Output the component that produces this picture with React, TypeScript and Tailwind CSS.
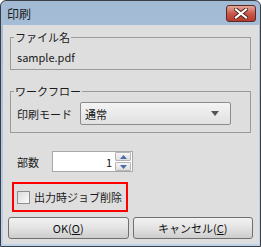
import React from "react";

const font = { fontFamily: '"Noto Sans CJK JP", "Noto Sans", sans-serif' };

function CloseButton() {
  return (
    <div className="flex h-[17px] w-[30px] items-center justify-center rounded-[3px] border border-[#5b2a24] bg-gradient-to-b from-[#e3a89c] via-[#c95a4b] to-[#b23a2c]">
      <svg width="14" height="11" viewBox="0 0 14 11">
        <path d="M2 1.5 L12 9.5 M12 1.5 L2 9.5" stroke="#4a1f1a" strokeWidth="4" strokeLinecap="square" />
        <path d="M2 1.5 L12 9.5 M12 1.5 L2 9.5" stroke="#ffffff" strokeWidth="2.2" strokeLinecap="square" />
      </svg>
    </div>
  );
}

function GroupBox({ title, children, className }: { title: string; children: React.ReactNode; className?: string }) {
  return (
    <fieldset className={"ml-[7px] mr-[8px] border border-[#9b9b9b] " + (className ?? "")}>
      <legend className="ml-[3px] px-[1px] text-[11px] leading-[14px] text-[#1a1a1a]">{title}</legend>
      {children}
    </fieldset>
  );
}

function Button({ label, accel }: { label: string; accel: string }) {
  return (
    <button className="flex h-[22px] flex-1 items-center justify-center rounded-[3px] border border-[#707070] bg-gradient-to-b from-[#f2f2f2] via-[#e3e3e3] to-[#cdcdcd] text-[11px] leading-[14px] text-[#111]">
      {label}(<span className="underline">{accel}</span>)
    </button>
  );
}

export default function App() {
  return (
    <div style={font} className="flex h-[247px] w-[261px] flex-col rounded-t-[6px] border border-[#3a3f46] bg-gradient-to-b from-[#a3bad5] to-[#bcd2ea]">
      <div className="flex h-[24px] shrink-0 items-center justify-between pl-[6px] pr-[4px] pt-[1px]">
        <span className="text-[12px] leading-[16px] text-[#1b1b1b]">印刷</span>
        <CloseButton />
      </div>

      <div className="mb-[2px] ml-[2px] mr-[1px] flex flex-1 flex-col bg-[#dedede] pt-[5px]">
        <GroupBox title="ファイル名">
          <div className="pb-[5px] pl-[6px] pt-[6px] text-[11px] leading-[14px] text-[#1a1a1a]">sample.pdf</div>
        </GroupBox>

        <GroupBox title="ワークフロー" className="mt-[14px]">
          <div className="flex items-center pb-[7px] pl-[6px] pt-[4px]">
            <span className="w-[63px] whitespace-nowrap text-[11px] leading-[14px] text-[#1a1a1a]">印刷モード</span>
            <div className="flex h-[23px] w-[151px] items-center justify-between rounded-[2px] border border-[#8c8c8c] bg-gradient-to-b from-[#f4f4f4] to-[#e1e1e1] pl-[4px] pr-[11px]">
              <span className="text-[11px] leading-[14px] text-[#111]">通常</span>
              <svg width="8" height="5" viewBox="0 0 8 5">
                <path d="M0 0 H8 L4 5 Z" fill="#555" />
              </svg>
            </div>
          </div>
        </GroupBox>

        <div className="mt-[18px] flex items-center pl-[14px]">
          <span className="w-[35px] text-[11px] leading-[14px] text-[#1a1a1a]">部数</span>
          <div className="flex h-[21px] w-[81px] items-center border border-[#a8a8a8] bg-white">
            <span className="flex-1 pr-[3px] text-right text-[11px] leading-[14px] text-[#111]">1</span>
            <div className="flex h-[19px] w-[17px] flex-col gap-[1px] pr-[1px]">
              <div className="flex flex-1 items-center justify-center rounded-[1px] border border-[#b5b5b5] bg-gradient-to-b from-[#f6f6f6] to-[#dedede]">
                <svg width="7" height="4" viewBox="0 0 7 4">
                  <path d="M0 4 H7 L3.5 0 Z" fill="#4b6aa8" />
                </svg>
              </div>
              <div className="flex flex-1 items-center justify-center rounded-[1px] border border-[#b5b5b5] bg-gradient-to-b from-[#f6f6f6] to-[#dedede]">
                <svg width="7" height="4" viewBox="0 0 7 4">
                  <path d="M0 0 H7 L3.5 4 Z" fill="#4b6aa8" />
                </svg>
              </div>
            </div>
          </div>
        </div>

        <div className="ml-[9px] mt-[10px] flex h-[30px] w-[116px] items-center gap-[4px] border-2 border-[#ff0000] pl-[3px]">
          <div className="h-[13px] w-[13px] shrink-0 border border-[#8f8f8f] bg-gradient-to-br from-[#dcdcdc] to-[#fbfbfb]" />
          <span className="whitespace-nowrap text-[11px] leading-[14px] text-[#1a1a1a]">出力時ジョブ削除</span>
        </div>

        <div className="ml-[5px] mr-[6px] mt-[5px] flex gap-[4px]">
          <Button label="OK" accel="O" />
          <Button label="キャンセル" accel="C" />
        </div>
      </div>
    </div>
  );
}
